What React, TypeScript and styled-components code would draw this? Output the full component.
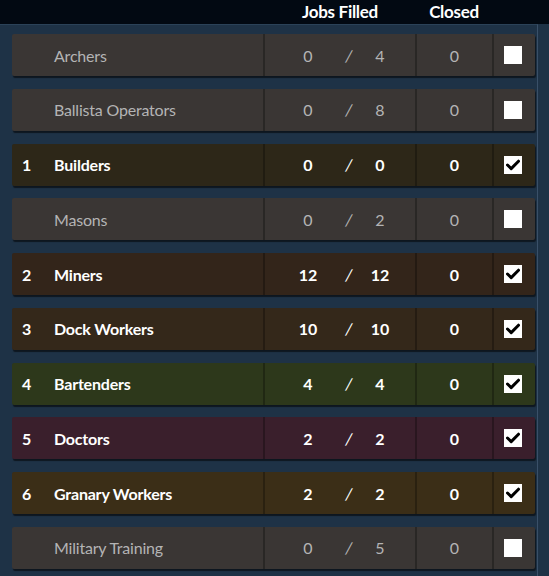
import React from 'react';
import styled, { createGlobalStyle } from 'styled-components';

// ===== DATA =====
type Tone = 'idle' | 'builder' | 'miner' | 'dock' | 'bar' | 'doctor' | 'granary';

interface Job {
  priority?: number;
  name: string;
  filled: number;
  total: number;
  closed: number;
  checked: boolean;
  tone: Tone;
}

const JOBS: Job[] = [
  { name: 'Archers', filled: 0, total: 4, closed: 0, checked: false, tone: 'idle' },
  { name: 'Ballista Operators', filled: 0, total: 8, closed: 0, checked: false, tone: 'idle' },
  { priority: 1, name: 'Builders', filled: 0, total: 0, closed: 0, checked: true, tone: 'builder' },
  { name: 'Masons', filled: 0, total: 2, closed: 0, checked: false, tone: 'idle' },
  { priority: 2, name: 'Miners', filled: 12, total: 12, closed: 0, checked: true, tone: 'miner' },
  { priority: 3, name: 'Dock Workers', filled: 10, total: 10, closed: 0, checked: true, tone: 'dock' },
  { priority: 4, name: 'Bartenders', filled: 4, total: 4, closed: 0, checked: true, tone: 'bar' },
  { priority: 5, name: 'Doctors', filled: 2, total: 2, closed: 0, checked: true, tone: 'doctor' },
  { priority: 6, name: 'Granary Workers', filled: 2, total: 2, closed: 0, checked: true, tone: 'granary' },
  { name: 'Military Training', filled: 0, total: 5, closed: 0, checked: false, tone: 'idle' },
];

const TONES: Record<Tone, string> = {
  idle: '#3a3634',
  builder: '#2d2718',
  miner: '#33251a',
  dock: '#34281a',
  bar: '#2d381b',
  doctor: '#3a1f2c',
  granary: '#3b2e17',
};

// ===== STYLES =====
const GlobalStyle = createGlobalStyle`
  html, body {
    margin: 0;
    padding: 0;
    background: #1e3246;
  }
  body {
    font-family: Lato, "Open Sans", sans-serif;
  }
`;

const Screen = styled.div`
  width: 549px;
  height: 576px;
  overflow: hidden;
  background: #1e3246;
`;

const TopBar = styled.div`
  height: 24px;
  background: #020912;
  display: grid;
  grid-template-columns: 265px 150px 78px;
  align-items: center;
`;

const HeadLabel = styled.div`
  grid-column: ${p => p.$col as number};
  text-align: center;
  color: #ffffff;
  font-size: 17px;
  font-weight: 700;
  letter-spacing: -0.3px;
  line-height: 24px;
` as any;

const Panel = styled.div`
  width: 538px;
  height: 552px;
  border-top: 1px solid #2b4258;
  border-right: 1px solid #3a5068;
  box-sizing: border-box;
  padding: 9px 0 0 12px;
  display: flex;
  flex-direction: column;
  gap: 12.78px;
`;

const Row = styled.div<{ $tone: Tone }>`
  width: 523px;
  height: 42px;
  flex: none;
  display: grid;
  grid-template-columns: 251px 152px 77px 1fr;
  background: ${p => TONES[p.$tone]};
  border-radius: 2px;
  box-shadow: 1px 2px 1px rgba(0, 0, 0, 0.55);
`;

const Cell = styled.div<{ $first?: boolean }>`
  display: flex;
  align-items: center;
  border-left: ${p => (p.$first ? 'none' : '2px solid rgba(0, 0, 0, 0.28)')};
`;

const Priority = styled.span<{ $active: boolean }>`
  width: 42px;
  padding-left: 10px;
  box-sizing: border-box;
  font-size: 16px;
  font-weight: 700;
  color: ${p => (p.$active ? '#ffffff' : '#b4b4b4')};
`;

const Name = styled.span<{ $active: boolean }>`
  font-size: 16px;
  font-weight: ${p => (p.$active ? 700 : 400)};
  letter-spacing: -0.2px;
  color: ${p => (p.$active ? '#ffffff' : '#b4b4b4')};
`;

const Ratio = styled.div<{ $active: boolean }>`
  display: grid;
  grid-template-columns: 40px 42px 20px;
  padding-left: 23px;
  font-size: 16px;
  font-weight: ${p => (p.$active ? 700 : 400)};
  color: ${p => (p.$active ? '#ffffff' : '#b4b4b4')};
  text-align: center;
`;

const Slash = styled.span`
  font-weight: 400;
  transform: skewX(-8deg);
`;

const Closed = styled.span<{ $active: boolean }>`
  width: 100%;
  text-align: center;
  font-size: 16px;
  font-weight: ${p => (p.$active ? 700 : 400)};
  color: ${p => (p.$active ? '#ffffff' : '#b4b4b4')};
`;

const CheckCell = styled(Cell)`
  justify-content: center;
  padding-right: 4px;
`;

const Box = styled.div`
  width: 18px;
  height: 18px;
  background: #ffffff;
  display: flex;
  align-items: center;
  justify-content: center;
`;

// ===== COMPONENTS =====
const Check = () => (
  <svg width="14" height="12" viewBox="0 0 14 12">
    <path d="M1.5 6 L5.2 9.6 L12.5 2.2" fill="none" stroke="#000" strokeWidth="3" strokeLinecap="round" strokeLinejoin="round" />
  </svg>
);

const JobRow: React.FC<{ job: Job }> = ({ job }) => {
  const active = job.checked;
  return (
    <Row $tone={job.tone}>
      <Cell $first>
        <Priority $active={active}>{job.priority ?? ''}</Priority>
        <Name $active={active}>{job.name}</Name>
      </Cell>
      <Cell>
        <Ratio $active={active}>
          <span>{job.filled}</span>
          <Slash>/</Slash>
          <span>{job.total}</span>
        </Ratio>
      </Cell>
      <Cell>
        <Closed $active={active}>{job.closed}</Closed>
      </Cell>
      <CheckCell>
        <Box>{job.checked && <Check />}</Box>
      </CheckCell>
    </Row>
  );
};

export default function App() {
  return (
    <Screen>
      <GlobalStyle />
      <TopBar>
        <HeadLabel $col={2}>Jobs Filled</HeadLabel>
        <HeadLabel $col={3}>Closed</HeadLabel>
      </TopBar>
      <Panel>
        {JOBS.map(job => (
          <JobRow key={job.name} job={job} />
        ))}
      </Panel>
    </Screen>
  );
}
